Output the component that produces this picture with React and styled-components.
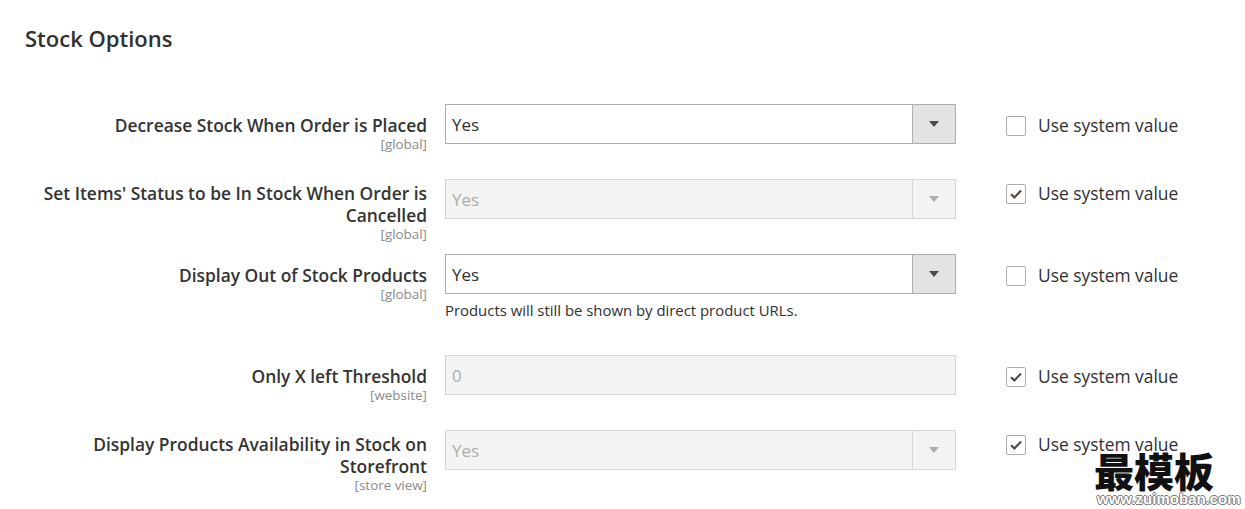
import styled, { createGlobalStyle } from "styled-components";

const GlobalStyle = createGlobalStyle`
  html, body {
    margin: 0;
    padding: 0;
    background: #ffffff;
  }
  body {
    font-family: "Open Sans", "Liberation Sans", sans-serif;
    color: #303030;
  }
`;

const Page = styled.div`
  position: relative;
  width: 1245px;
  height: 509px;
  overflow: hidden;
  padding: 25px 0 0 25px;
  box-sizing: border-box;
`;

const Title = styled.h2`
  margin: 0;
  font-size: 22px;
  line-height: 26px;
  font-weight: 600;
  color: #303030;
`;

const Fieldset = styled.div`
  margin-top: 53px;
  display: flex;
  flex-direction: column;
`;

const Row = styled.div`
  display: grid;
  grid-template-columns: 402px 511px auto;
  column-gap: 18px;
  align-items: start;
`;

const LabelCell = styled.div`
  text-align: right;
  padding-top: ${(p) => (p.$multi ? 3 : 10)}px;
`;

const LabelText = styled.div`
  font-size: 17.4px;
  line-height: 22px;
  font-weight: 600;
  color: #333333;
`;

const Scope = styled.div`
  font-size: 13.4px;
  line-height: 16px;
  color: #8a8a8a;
`;

const Control = styled.div`
  padding-bottom: 35px;
`;

const SelectBox = styled.div`
  display: flex;
  height: 40px;
  box-sizing: border-box;
  border: 1px solid ${(p) => (p.$disabled ? "#d6d6d6" : "#adadad")};
  background: ${(p) => (p.$disabled ? "#f3f3f3" : "#ffffff")};
`;

const Value = styled.div`
  flex: 1;
  display: flex;
  align-items: center;
  padding-left: 6px;
  font-size: 17px;
  color: ${(p) => (p.$disabled ? "#adadad" : "#303030")};
`;

const ArrowButton = styled.div`
  width: 42px;
  display: flex;
  align-items: center;
  justify-content: center;
  border-left: 1px solid ${(p) => (p.$disabled ? "#d6d6d6" : "#adadad")};
  background: ${(p) => (p.$disabled ? "#f3f3f3" : "#e3e3e3")};
`;

const Arrow = styled.span`
  width: 0;
  height: 0;
  border-left: 5px solid transparent;
  border-right: 5px solid transparent;
  border-top: 6px solid ${(p) => (p.$disabled ? "#adadad" : "#514943")};
`;

const Note = styled.div`
  margin-top: 7px;
  font-size: 14.9px;
  line-height: 19px;
  color: #303030;
`;

const CheckCell = styled.label`
  display: flex;
  align-items: center;
  gap: 12px;
  padding-top: ${(p) => (p.$multi ? 5 : 12)}px;
  margin-left: 32px;
`;

const Box = styled.span`
  width: 20px;
  height: 20px;
  box-sizing: border-box;
  border: 1px solid #adadad;
  border-radius: 2px;
  background: #ffffff;
  display: flex;
  align-items: center;
  justify-content: center;
`;

const CheckText = styled.span`
  font-size: 17.4px;
  line-height: 20px;
  margin-top: -2px;
  color: #303030;
`;

const Watermark = styled.div`
  position: absolute;
  left: 1094px;
  top: 449px;
  display: flex;
  flex-direction: column;
  align-items: flex-start;
  pointer-events: none;
`;

const WatermarkHan = styled.div`
  font-family: "Noto Sans CJK SC", sans-serif;
  font-size: 40px;
  line-height: 42px;
  font-weight: 900;
  color: #111111;
`;

const WatermarkUrl = styled.div`
  font-family: "Liberation Sans", sans-serif;
  font-size: 15px;
  line-height: 16px;
  font-weight: 700;
  color: #ffffff;
  text-shadow: 1px 0 0 #777, -1px 0 0 #777, 0 1px 0 #777, 0 -1px 0 #777;
  margin-left: 3px;
`;

function Check({ checked, multi }) {
  return (
    <CheckCell $multi={multi}>
      <Box>
        {checked && (
          <svg width="14" height="12" viewBox="0 0 14 12">
            <path d="M2 6.2 L5.4 9.4 L12 2.6" fill="none" stroke="#514943" strokeWidth="2.2" />
          </svg>
        )}
      </Box>
      <CheckText>Use system value</CheckText>
    </CheckCell>
  );
}

function Select({ value, disabled }) {
  return (
    <SelectBox $disabled={disabled}>
      <Value $disabled={disabled}>{value}</Value>
      <ArrowButton $disabled={disabled}>
        <Arrow $disabled={disabled} />
      </ArrowButton>
    </SelectBox>
  );
}

function TextInput({ value }) {
  return (
    <SelectBox $disabled>
      <Value $disabled>{value}</Value>
    </SelectBox>
  );
}

const fields = [
  { label: "Decrease Stock When Order is Placed", scope: "[global]", type: "select", disabled: false, checked: false },
  { label: "Set Items' Status to be In Stock When Order is Cancelled", scope: "[global]", type: "select", disabled: true, checked: true, multi: true },
  {
    label: "Display Out of Stock Products",
    scope: "[global]",
    type: "select",
    disabled: false,
    checked: false,
    note: "Products will still be shown by direct product URLs.",
  },
  { label: "Only X left Threshold", scope: "[website]", type: "text", value: "0", checked: true },
  { label: "Display Products Availability in Stock on Storefront", scope: "[store view]", type: "select", disabled: true, checked: true, multi: true },
];

function App() {
  return (
    <>
      <GlobalStyle />
      <Page>
        <Title>Stock Options</Title>
        <Fieldset>
          {fields.map((f) => (
            <Row key={f.label}>
              <LabelCell $multi={f.multi}>
                <LabelText>{f.label}</LabelText>
                <Scope>{f.scope}</Scope>
              </LabelCell>
              <Control>
                {f.type === "select" ? (
                  <Select value="Yes" disabled={f.disabled} />
                ) : (
                  <TextInput value={f.value} />
                )}
                {f.note && <Note>{f.note}</Note>}
              </Control>
              <Check checked={f.checked} multi={f.multi} />
            </Row>
          ))}
        </Fieldset>
        <Watermark>
          <WatermarkHan>最模板</WatermarkHan>
          <WatermarkUrl>www.zuimoban.com</WatermarkUrl>
        </Watermark>
      </Page>
    </>
  );
}

export default App;
